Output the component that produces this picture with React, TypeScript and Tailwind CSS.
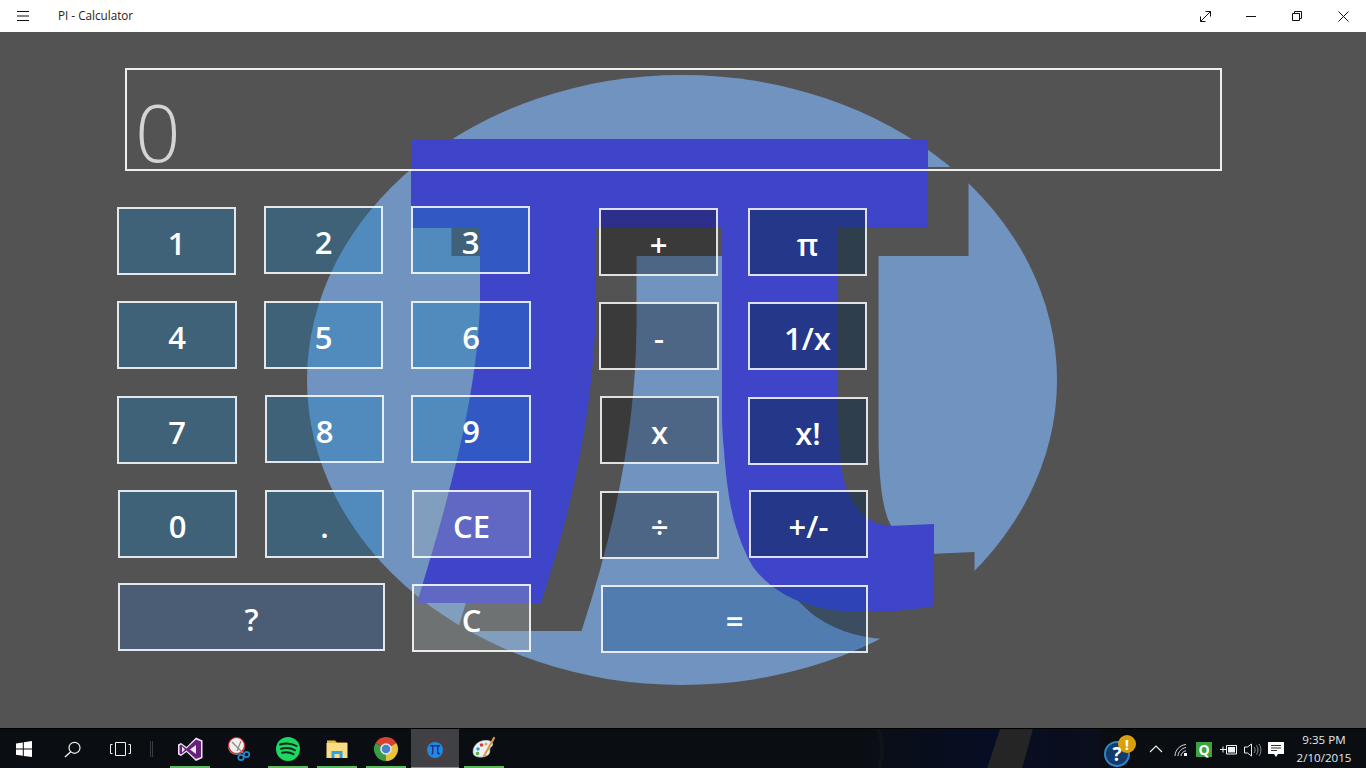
const FONT = "font-['Open_Sans',_'Noto_Sans',_sans-serif]";

const NUM = "bg-[#1c7dba]/[.36]";
const OPS = "bg-black/30";
const FUNCS = "bg-[#0a2a48]/50";
const CLEAR = "bg-[#adbbbb]/30";

function CalcButton({ label, className }: { label: string; className: string }) {
  return (
    <button className={`flex h-[68px] items-center justify-center border-2 border-white/85 pt-[4px] text-[31px] font-semibold text-white ${className}`}>
      {label}
    </button>
  );
}

// the logo behind the keys, in page coordinates
const PI_SHAPE =
  "M411 139H928V228H838V400C838 440 840 470 847 490C853 505 865 520 877 523C885 526 890 526 900 525.5L934 524V606C910 610 890 612 870 612C840 612 825 610 803 603C790 598 782 593 773 587C765 580 760 576 753 567C745 553 740 540 737 530C730 510 726 480 724 450C722 430 722 420 722 400V228H596V300C595 400 575 500 541 603H417C445 510 478 400 480 300V228H411Z";

function PiBackdrop() {
  return (
    <svg className="absolute inset-0" width="1366" height="696" viewBox="0 32 1366 696">
      <ellipse cx="682" cy="380" rx="375" ry="305" fill="#7093c0" />
      <path d={PI_SHAPE} transform="translate(40.5 28)" fill="#535353" />
      <path d={PI_SHAPE} fill="#3f45c9" />
    </svg>
  );
}

function TitleBar() {
  return (
    <div className="flex h-8 shrink-0 items-center bg-white text-black">
      <svg className="ml-[17px]" width="12" height="10" viewBox="0 0 12 10" stroke="#111" fill="none">
        <path d="M0 .5H12M0 5H12M0 9.5H12" />
      </svg>
      <span className="ml-[29px] text-[11.7px] text-[#222]">PI - Calculator</span>
      <div className="ml-auto flex">
        <div className="flex h-8 w-[46px] items-center justify-center">
          <svg width="11" height="11" viewBox="0 0 11 11" stroke="#111" fill="none">
            <path d="M.5 10.5L10.5 .5M5.5 .5H10.5V5.5M.5 5.5V10.5H5.5" />
          </svg>
        </div>
        <div className="flex h-8 w-[46px] items-center justify-center">
          <div className="h-px w-[10px] bg-[#111]" />
        </div>
        <div className="flex h-8 w-[46px] items-center justify-center">
          <svg width="10" height="10" viewBox="0 0 10 10" stroke="#111" fill="none">
            <path d="M.5 2.5H7.5V9.5H.5ZM2.5 2.5V.5H9.5V7.5H7.5" />
          </svg>
        </div>
        <div className="flex h-8 w-[46px] items-center justify-center">
          <svg width="11" height="11" viewBox="0 0 11 11" stroke="#111" fill="none">
            <path d="M.5 .5L10.5 10.5M10.5 .5L.5 10.5" />
          </svg>
        </div>
      </div>
    </div>
  );
}

function Keypad() {
  return (
    <div className="mt-[35px] flex items-start pl-[117px]">
      <div className="grid w-[414px] grid-cols-[147px_147px_120px] grid-rows-[95px_94px_95px_93px_69px]">
        <CalcButton label="1" className={`${NUM} mt-px w-[119px]`} />
        <CalcButton label="2" className={`${NUM} w-[119px]`} />
        <CalcButton label="3" className={`${NUM} w-[119px]`} />
        <CalcButton label="4" className={`${NUM} w-[120px]`} />
        <CalcButton label="5" className={`${NUM} w-[119px]`} />
        <CalcButton label="6" className={`${NUM} w-[120px]`} />
        <CalcButton label="7" className={`${NUM} mt-px w-[120px]`} />
        <CalcButton label="8" className={`${NUM} ml-px w-[119px]`} />
        <CalcButton label="9" className={`${NUM} w-[120px]`} />
        <CalcButton label="0" className={`${NUM} ml-px w-[119px]`} />
        <CalcButton label="." className={`${NUM} ml-px w-[119px]`} />
        <CalcButton label="CE" className={`${CLEAR} ml-px w-[119px]`} />
        <CalcButton label="?" className="col-span-2 ml-px w-[267px] bg-[#3975c1]/30" />
        <CalcButton label="C" className={`${CLEAR} ml-px mt-px w-[119px]`} />
      </div>
      <div className="ml-[68px] mt-[2px] grid grid-cols-[149px_120px] grid-rows-[94px_94px_95px_94px_69px]">
        <CalcButton label="+" className={`${OPS} w-[119px]`} />
        <CalcButton label="π" className={`${FUNCS} w-[119px]`} />
        <CalcButton label="-" className={`${OPS} w-[120px]`} />
        <CalcButton label="1/x" className={`${FUNCS} w-[119px]`} />
        <CalcButton label="x" className={`${OPS} ml-px w-[119px]`} />
        <CalcButton label="x!" className={`${FUNCS} mt-px w-[120px]`} />
        <CalcButton label="÷" className={`${OPS} ml-px w-[119px]`} />
        <CalcButton label="+/-" className={`${FUNCS} ml-px -mt-px w-[119px]`} />
        <CalcButton label="=" className="col-span-2 ml-[2px] w-[267px] bg-[#004080]/[.27]" />
      </div>
    </div>
  );
}

// all the app icons sit on one 40px tall strip
function TaskbarIcons() {
  return (
    <svg className="absolute left-0 top-0" width="520" height="40" viewBox="0 728 520 40">
      {/* start */}
      <path d="M16 742.4L22.8 741.4V747.6H16ZM23.8 741.2L32 740V747.6H23.8ZM16 748.6H22.8V754.8L16 753.8ZM23.8 748.6H32V756L23.8 754.9Z" fill="#fff" />
      {/* search */}
      <circle cx="74.5" cy="746.8" r="5.5" fill="none" stroke="#f2f2f2" strokeWidth="1.2" />
      <path d="M70.5 751L65 756" stroke="#f2f2f2" strokeWidth="1.4" />
      {/* task view */}
      <path d="M115.5 741.5H125.5V754.5H115.5ZM112.5 743.5H110.5V752.5H112.5M128.5 743.5H130.5V752.5H128.5" fill="none" stroke="#f2f2f2" />
      <path d="M150.5 740V756M152.5 740V756" stroke="#3a3d40" />
      {/* visual studio */}
      <path d="M196 736.5L202.5 739.5V757L196 760L186.5 751L181 755L178 753.5V743.5L181 742L186.5 746Z" fill="#f0e8f2" />
      <path d="M196 738.5L201 740.5V756L196 758L186.5 749.5L181 753.5L179.5 752.5V744.5L181 743.5L186.5 747.5ZM182 745.5V751.5L185 748.5ZM190 748.5L196 753V744Z" fill="#68217a" fillRule="evenodd" />
      {/* snipping tool */}
      <circle cx="236.5" cy="745.5" r="8.5" fill="#8d8d8d" />
      <circle cx="236.5" cy="744.5" r="8" fill="#f1eeee" stroke="#c8242b" strokeWidth="1.2" />
      <path d="M232 741L243 752M241 740L237 750" stroke="#888" strokeWidth="1.2" />
      <circle cx="241" cy="756.5" r="2.7" fill="none" stroke="#1f86c9" strokeWidth="1.8" />
      <circle cx="246.5" cy="753.5" r="2.7" fill="none" stroke="#1f86c9" strokeWidth="1.8" />
      {/* spotify */}
      <circle cx="288" cy="748" r="12" fill="#1ed760" />
      <path d="M280 743.5C285 742 292 742.5 296.5 745M281 747.8C285.5 746.6 291 747 295 749.3M282 751.8C285.5 751 290 751.3 293.5 753.2" fill="none" stroke="#10281a" strokeWidth="1.9" strokeLinecap="round" />
      {/* explorer */}
      <path d="M327 739.5H335L337 741.5H347V743H327Z" fill="#e9b93f" />
      <rect x="326.5" y="742" width="21" height="15" fill="#f8dd85" />
      <path d="M331.5 757V750H342.5V757H339.5V753H334.5V757Z" fill="#2aa4e8" />
      {/* chrome */}
      <path d="M386 748L375.6 742A12 12 0 0 1 396.4 742Z" fill="#d8432f" />
      <path d="M386 748L396.4 742A12 12 0 0 1 386 760Z" fill="#e9c23a" />
      <path d="M386 748L386 760A12 12 0 0 1 375.6 742Z" fill="#3a9d45" />
      <circle cx="386" cy="748" r="5.8" fill="#e9e9e9" />
      <circle cx="386" cy="748" r="4.3" fill="#4a83c9" />
      {/* pi app, running */}
      <rect x="423" y="737" width="24" height="23" fill="#473f41" />
      <circle cx="435" cy="749" r="8" fill="#1e8ae0" />
      <path d="M430 744H440V745.5H438.5V750.5C438.5 751.5 439 752 440 752V753.5H438.5C437.3 753.5 437 752.5 437 751V745.5H433.5V750C433.5 751.5 433.2 753 432.8 753.5H431.2C431.8 752.5 432 751.5 432 750V745.5H430Z" fill="#27308f" />
      {/* paint */}
      <path d="M473 751C473 743 481 738.5 488 739.5C493 740.5 494 744 491 746C488.5 748 491 750 489 753C486 757 473 758 473 751Z" fill="#eef1f3" stroke="#a9b4bf" strokeWidth=".7" />
      <circle cx="478" cy="748" r="1.8" fill="#2e9fd8" />
      <circle cx="481.5" cy="744" r="1.8" fill="#d83a3a" />
      <circle cx="477.5" cy="752.5" r="1.8" fill="#58b044" />
      <circle cx="486" cy="743" r="1.5" fill="#e9a23a" />
      <path d="M494 737L484 755" stroke="#d79a49" strokeWidth="2.2" strokeLinecap="round" />
    </svg>
  );
}

function TrayIcons() {
  return (
    <div className="flex h-10 items-center">
      <div className="relative h-10 w-[186px]">
        <svg className="absolute left-0 top-0" width="186" height="40" viewBox="1100 728 186 40">
          <circle cx="1117" cy="753" r="12" fill="#123a6b" stroke="#2f86c5" strokeWidth="2" />
          <circle cx="1127" cy="743" r="9" fill="#d9a00c" />
          <path d="M1150 751L1156 745L1162 751" fill="none" stroke="#f2f2f2" strokeWidth="1.1" />
          <path d="M1175 755C1175 749 1180 744 1186 743.5M1178 755C1178 751 1182 747 1186 746.5M1181 755C1181 752.5 1183.5 750 1186 749.8" fill="none" stroke="#d8d8d8" />
          <rect x="1184" y="752" width="3" height="3" fill="#fff" />
          <path d="M1223 745.5V751.5M1220 748.5H1226" stroke="#f2f2f2" />
          <path d="M1226.5 744.5H1236.5V753H1226.5Z" fill="none" stroke="#f2f2f2" />
          <rect x="1228" y="746" width="7" height="5.5" fill="#f2f2f2" />
          <path d="M1244.5 746H1247.5L1251.5 743V755L1247.5 752H1244.5Z" fill="none" stroke="#eee" />
          <path d="M1254 746C1255.5 748 1255.5 750 1254 752M1256.5 744.5C1258.5 747 1258.5 751 1256.5 753.5M1259 743C1261.5 746.5 1261.5 751.5 1259 755" fill="none" stroke="#8d8d8d" />
          <path d="M1268 741H1284V753H1278L1276 756L1274 753H1268Z" fill="#fff" />
          <path d="M1271 744.5H1281M1271 747H1281M1271 749.5H1277" stroke="#333" />
        </svg>
        <span className="absolute left-[11px] top-[11px] flex w-[12px] justify-center text-[19px] font-bold leading-[28px] text-white">?</span>
        <span className="absolute left-[21px] top-[4px] flex w-[12px] justify-center text-[15px] font-bold leading-[22px] text-white">!</span>
        <span className="absolute left-[96px] top-[13px] flex h-[15px] w-[16px] items-center justify-center bg-[#3ca33f] text-[14px] font-bold text-white">Q</span>
      </div>
      <div className="w-[80px] pr-[4px] text-center text-[11.6px] leading-[18px] text-[#e8e8e8]">
        <div>9:35 PM</div>
        <div>2/10/2015</div>
      </div>
    </div>
  );
}

function Taskbar() {
  return (
    <div className="relative flex h-10 shrink-0 justify-end border-t border-black bg-[#0a0e13]">
      {/* bit of wallpaper showing through */}
      <svg className="absolute left-[860px] top-0" width="240" height="40" viewBox="0 0 240 40">
        <defs>
          <linearGradient id="wall" x1="0" x2="1" y1="0" y2="0">
            <stop offset="0" stopColor="#0a0e13" />
            <stop offset="0.5" stopColor="#070d24" />
            <stop offset="1" stopColor="#0a0e1c" />
          </linearGradient>
        </defs>
        <rect width="240" height="40" fill="url(#wall)" />
        <path d="M18 0C23 12 24 20 19 40" stroke="#0e1419" strokeWidth="4" fill="none" />
        <path d="M140 0H173L162 40H127Z" fill="#252525" />
      </svg>
      <div className="absolute left-[170px] bottom-0 h-[2px] w-[40px] bg-[#5cb85c]" />
      <div className="absolute left-[268px] bottom-0 h-[2px] w-[40px] bg-[#5cb85c]" />
      <div className="absolute left-[317px] bottom-0 h-[2px] w-[40px] bg-[#5cb85c]" />
      <div className="absolute left-[366px] bottom-0 h-[2px] w-[40px] bg-[#5cb85c]" />
      <div className="absolute left-[411px] top-0 h-10 w-[48px] border-b-2 border-[#5cb85c] bg-[#3f4145]" />
      <div className="absolute left-[464px] bottom-0 h-[2px] w-[40px] bg-[#5cb85c]" />
      <TaskbarIcons />
      <div className="relative">
        <TrayIcons />
      </div>
    </div>
  );
}

export default function App() {
  return (
    <div className={`flex h-[768px] w-[1366px] flex-col overflow-hidden ${FONT}`}>
      <TitleBar />
      <div className="relative flex-1 bg-[#535353]">
        <PiBackdrop />
        <div className="relative pt-[36px]">
          <div className="ml-[125px] flex h-[103px] w-[1097px] items-center border-2 border-white/90 pl-[8px] pt-[23px]">
            <span className="text-[80px] font-light leading-[80px] text-[#d4d4d4]">0</span>
          </div>
          <Keypad />
        </div>
      </div>
      <Taskbar />
    </div>
  );
}
